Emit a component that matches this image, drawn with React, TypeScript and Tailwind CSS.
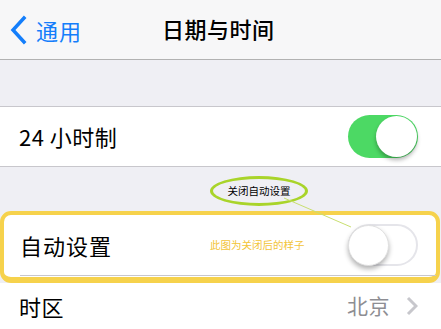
import React from 'react';

const font = { fontFamily: '"Noto Sans CJK SC", "Noto Sans", sans-serif' };

const Toggle = ({ on }: { on: boolean }) => (
    <div
        className={
            on
                ? 'relative w-[70px] h-[43px] rounded-full bg-[#4cd964]'
                : 'relative w-[70px] h-[42px] rounded-full bg-white border-2 border-[#e5e5ea]'
        }
    >
        <div
            className={
                on
                    ? 'absolute right-[1px] top-[1px] w-[41px] h-[41px] rounded-full bg-white shadow-[0_3px_4px_rgba(0,0,0,0.3)]'
                    : 'absolute left-[-2px] top-[-1px] w-[41px] h-[41px] rounded-full bg-white shadow-[0_3px_5px_rgba(0,0,0,0.3)] border border-[#e0e0e0]'
            }
        />
    </div>
);

const App = () => {
    return (
        <div className="relative w-[441px] h-[329px] overflow-hidden bg-[#efeff4] text-black" style={font}>
            {/* nav bar */}
            <div className="relative flex items-center h-[60px] bg-[#f7f7f8] border-b border-[#b2b2b2]">
                <div className="flex items-center pl-[10px] text-[#147efb]">
                    <svg width="17" height="30" viewBox="0 0 17 30">
                        <path d="M14 3 L3 15 L14 27" fill="none" stroke="#147efb" strokeWidth="3.5" strokeLinecap="square" />
                    </svg>
                    <span className="ml-[9px] text-[22px] tracking-[1px] leading-none">通用</span>
                </div>
                <div className="absolute left-[162px] top-[17px] text-[22px] tracking-[0.5px] font-medium leading-none">日期与时间</div>
            </div>

            <div className="h-[47px] border-b border-[#c8c7cc]" />

            <div className="flex items-center justify-between h-[60px] pl-[19px] pr-[23px] bg-white border-b border-[#c8c7cc]">
                <span className="text-[22px] tracking-[0.5px]">24 小时制</span>
                <Toggle on />
            </div>

            <div className="h-[44px]" />

            {/* highlighted row */}
            <div className="mr-[1px] rounded-[11px] border-4 border-b-[6px] border-[#f6d24c] bg-white pb-[1px]">
                <div className="flex items-center h-[60px] pl-[16px] pr-[18px]">
                    <span className="text-[22px] tracking-[1px]">自动设置</span>
                    <span className="ml-[98px] text-[10.5px] text-[#f3c437]">此图为关闭后的样子</span>
                    <div className="ml-auto">
                        <Toggle on={false} />
                    </div>
                </div>
                <div className="ml-[16px] h-px bg-[#c8c7cc]" />
            </div>

            <div className="flex items-center h-[46px] pl-[19px] pr-[23px] bg-white">
                <span className="text-[22px] tracking-[0.5px]">时区</span>
                <span className="ml-auto text-[21px] text-[#8e8e93] tracking-[0.5px]">北京</span>
                <svg className="ml-[16px]" width="12" height="20" viewBox="0 0 12 20">
                    <path d="M2 2 L10 10 L2 18" fill="none" stroke="#c7c7cc" strokeWidth="3" />
                </svg>
            </div>

            {/* annotation */}
            <div className="absolute left-[210px] top-[176px] w-[98px] h-[30px] rounded-[50%] border-[3px] border-[#a9d42a] flex items-center justify-center">
                <span className="text-[10.5px] leading-none">关闭自动设置</span>
            </div>
            <svg className="absolute left-0 top-0 pointer-events-none" width="441" height="329">
                <line x1="284" y1="198" x2="351" y2="227" stroke="#c9df70" strokeWidth="1" />
            </svg>
        </div>
    );
};

export default App;
